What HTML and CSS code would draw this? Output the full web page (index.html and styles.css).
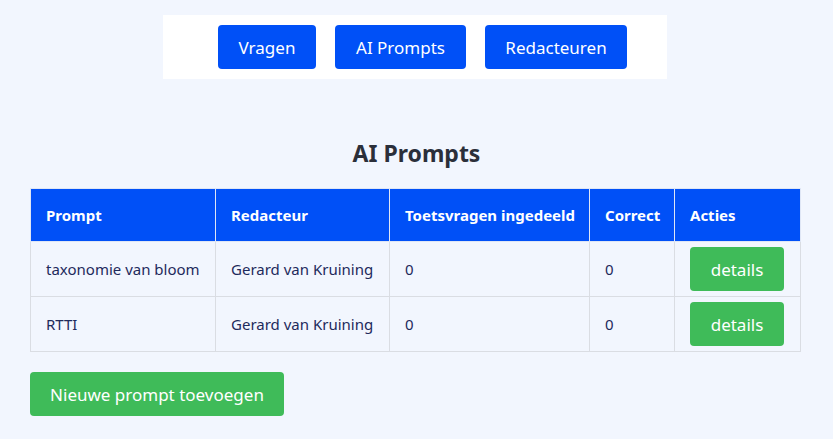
FILE: index.html
```html
<!DOCTYPE html>
<html lang="nl">
<head>
<meta charset="utf-8">
<title>AI Prompts</title>
<link rel="stylesheet" href="styles.css">
</head>
<body>
<nav class="nav">
  <a class="btn btn-blue" href="#">Vragen</a>
  <a class="btn btn-blue" href="#">AI Prompts</a>
  <a class="btn btn-blue" href="#">Redacteuren</a>
</nav>
<main class="main">
  <h1 class="title">AI Prompts</h1>
  <table class="table">
    <colgroup>
      <col class="c1"><col class="c2"><col class="c3"><col class="c4"><col class="c5">
    </colgroup>
    <thead>
      <tr><th>Prompt</th><th>Redacteur</th><th>Toetsvragen ingedeeld</th><th>Correct</th><th>Acties</th></tr>
    </thead>
    <tbody>
      <tr><td>taxonomie van bloom</td><td>Gerard van Kruining</td><td>0</td><td>0</td><td class="act"><a class="btn btn-green btn-details" href="#">details</a></td></tr>
      <tr><td>RTTI</td><td>Gerard van Kruining</td><td>0</td><td>0</td><td class="act"><a class="btn btn-green btn-details" href="#">details</a></td></tr>
    </tbody>
  </table>
  <a class="btn btn-green btn-new" href="#">Nieuwe prompt toevoegen</a>
</main>
</body>
</html>
```
FILE: styles.css
```css
* { box-sizing: border-box; }
html, body { margin: 0; padding: 0; }
body {
  background: #f2f6fe;
  font-family: "Noto Sans", "Open Sans", sans-serif;
  color: #1e2a5c;
  width: 833px;
  height: 439px;
  overflow: hidden;
}
.nav {
  width: 504px;
  margin: 15px auto 0 163px;
  background: #ffffff;
  display: flex;
  gap: 19px;
  padding: 10px 40px 10px 55px;
  height: 64px;
}
.btn {
  display: inline-flex;
  align-items: center;
  justify-content: center;
  height: 44px;
  border-radius: 4px;
  color: #ffffff;
  text-decoration: none;
  font-size: 17px;
}
.btn-blue { background: #0050f7; }
.nav .btn:nth-child(1) { width: 98px; }
.nav .btn:nth-child(2) { width: 131px; }
.nav .btn:nth-child(3) { width: 142px; }
.btn-green { background: #3fbb59; }
.main { padding: 0 30px; }
.title {
  margin: 58px 0 0;
  text-align: center;
  font-size: 23px;
  font-weight: 700;
  color: #2b2f3a;
  line-height: 32px;
}
.table {
  margin-top: 19px;
  width: 770px;
  border-collapse: collapse;
  table-layout: fixed;
  font-size: 15px;
}
.c1 { width: 185px; }
.c2 { width: 174px; }
.c3 { width: 200px; }
.c4 { width: 85px; }
.c5 { width: 126px; }
.table th, .table td {
  border: 1px solid #dadde3;
  text-align: left;
  padding: 0 15px;
  white-space: nowrap;
}
.table th {
  background: #0050f7;
  color: #ffffff;
  font-weight: 700;
  height: 53px;
  border-color: #dfe6f5;
}
.table td { height: 55px; }
.btn-details { width: 94px; font-size: 17px; }
.btn-new {
  margin-top: 20px;
  width: 254px;
}
```
